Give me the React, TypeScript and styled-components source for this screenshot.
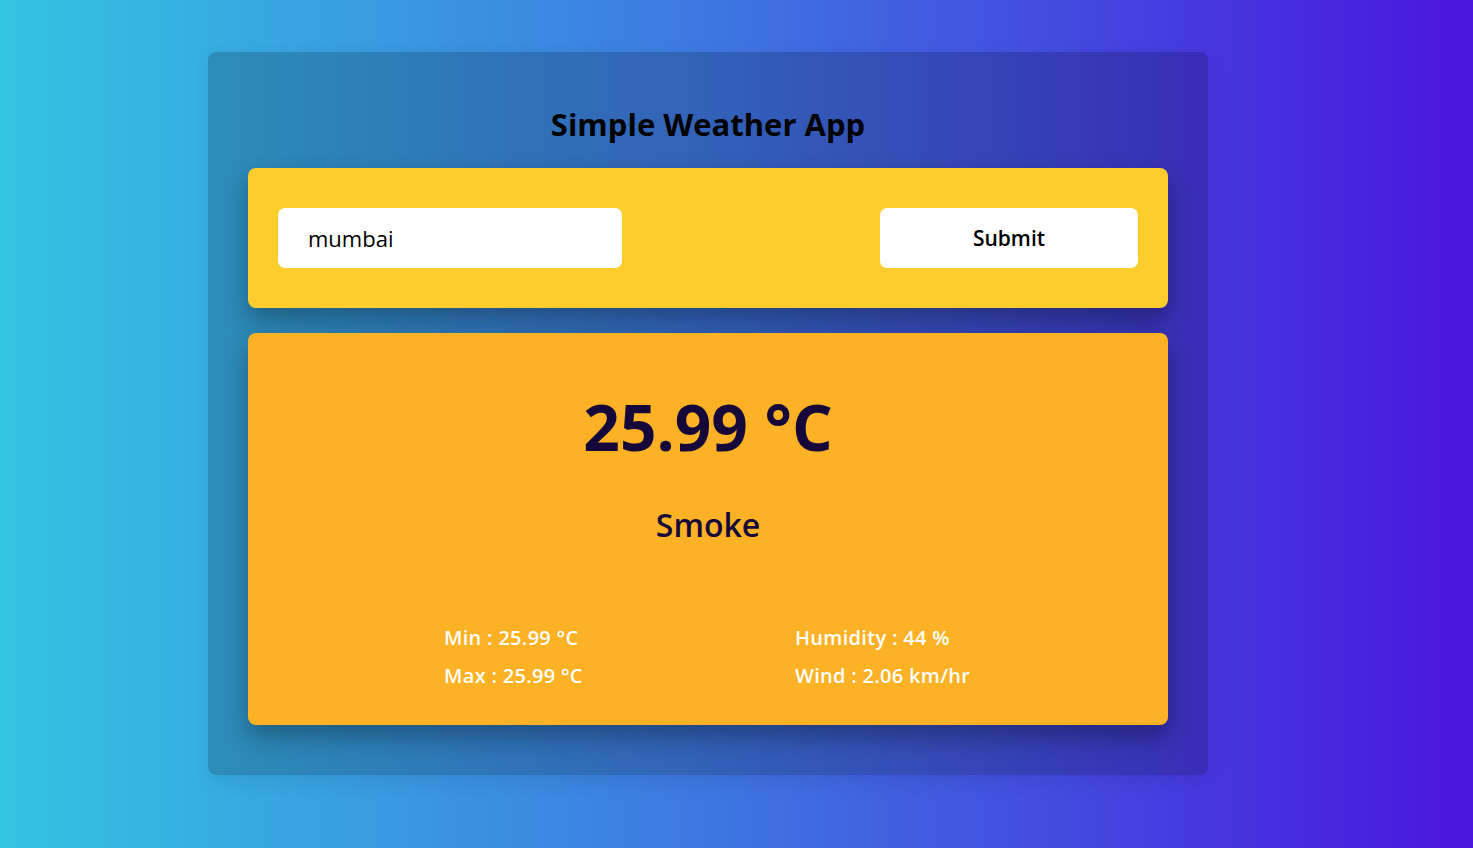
import styled, { createGlobalStyle } from "styled-components";

const GlobalStyle = createGlobalStyle`
    html, body {
        margin: 0;
        padding: 0;
    }
    body {
        font-family: "Open Sans", "Noto Sans", sans-serif;
        background: linear-gradient(to right, #33c4e1, #3e74e1 50%, #4a15dd);
        min-height: 100vh;
    }
`

const Page = styled.div`
    min-height: 848px;
    padding: 52px 57px 0 0;
    box-sizing: border-box;
`

const Card = styled.div`
    width: 1000px;
    margin: 0 auto;
    padding: 40px 40px 50px;
    box-sizing: border-box;
    background-color: rgba(0, 0, 0, 0.18);
    border-radius: 8px;
    box-shadow: 2px 6px 20px rgba(0, 0, 0, 0.08);
`

const Title = styled.h1`
    margin: 12px 0 24px;
    font-size: 31px;
    font-weight: 700;
    color: #000;
    text-align: center;
    line-height: 40px;
`

const Panel = styled.div<{ $bg: string }>`
    background-color: ${p => p.$bg};
    border-radius: 8px;
    box-shadow: 0 12px 24px rgba(0, 0, 0, 0.3);
`

const SearchForm = styled.form`
    display: flex;
    justify-content: space-between;
    align-items: center;
    padding: 40px 30px;
`

const CityInput = styled.input`
    width: 344px;
    height: 60px;
    box-sizing: border-box;
    border: none;
    border-radius: 7px;
    padding: 0 30px;
    font-family: inherit;
    font-size: 22px;
    color: #000;
    background: #fff;
    outline: none;
`

const SubmitButton = styled.button`
    width: 258px;
    height: 60px;
    border: none;
    border-radius: 7px;
    background: #fff;
    font-family: inherit;
    font-size: 21px;
    font-weight: 600;
    color: #000;
    cursor: pointer;
`

const Result = styled.div`
    margin-top: 25px;
    padding: 52px 0 35px;
    display: flex;
    flex-direction: column;
    align-items: center;
`

const Temp = styled.h2`
    margin: 0;
    font-size: 64px;
    font-weight: 700;
    line-height: 84px;
    color: #15073a;
`

const Condition = styled.p`
    margin: 36px 0 0;
    font-size: 32px;
    font-weight: 600;
    line-height: 40px;
    color: #15073a;
`

const Details = styled.div`
    align-self: stretch;
    margin-top: 79px;
    padding-left: 196px;
    display: grid;
    grid-template-columns: 351px auto;
    row-gap: 10px;
`

const Stat = styled.span`
    font-size: 20px;
    font-weight: 600;
    letter-spacing: 0.3px;
    line-height: 28px;
    color: #fff;
`

export default function App() {
    const stats = [
        "Min : 25.99 °C",
        "Humidity : 44 %",
        "Max : 25.99 °C",
        "Wind : 2.06 km/hr",
    ]

    return (
        <Page>
            <GlobalStyle/>
            <Card>
                <Title>Simple Weather App</Title>
                <Panel $bg="#fdcc2d">
                    <SearchForm onSubmit={e => e.preventDefault()}>
                        <CityInput type="text" defaultValue="mumbai"/>
                        <SubmitButton type="submit">Submit</SubmitButton>
                    </SearchForm>
                </Panel>
                <Panel $bg="#fdb124">
                    <Result>
                        <Temp>25.99 °C</Temp>
                        <Condition>Smoke</Condition>
                        <Details>
                            {stats.map(s => <Stat key={s}>{s}</Stat>)}
                        </Details>
                    </Result>
                </Panel>
            </Card>
        </Page>
    )
}
